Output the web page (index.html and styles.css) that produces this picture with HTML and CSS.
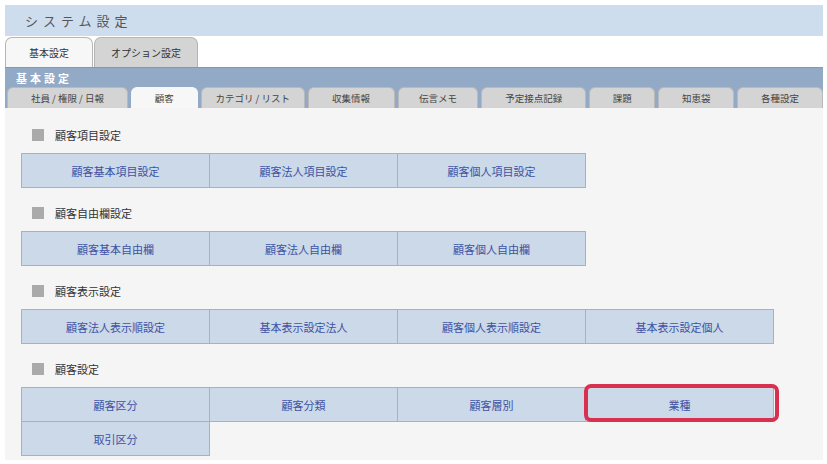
FILE: index.html
```html
<!DOCTYPE html>
<html>
	<head>
		<meta charset="utf-8">
		<title>システム設定</title>
		<link rel="stylesheet" href="styles.css">
	</head>
	<body>
		<div class="header">
			<h1 class="title">システム設定</h1>
		</div>
		<div class="maintabs">
			<span class="mtab active">基本設定</span>
			<span class="mtab">オプション設定</span>
		</div>
		<div class="panel">
			<div class="panel-title">基本設定</div>
			<div class="subtabs">
				<span class="stab w121">社員 / 権限 / 日報</span>
				<span class="stab active w67">顧客</span>
				<span class="stab w104">カテゴリ / リスト</span>
				<span class="stab w87">収集情報</span>
				<span class="stab w81">伝言メモ</span>
				<span class="stab w105">予定接点記録</span>
				<span class="stab w66">課題</span>
				<span class="stab w76">知恵袋</span>
				<span class="stab w86">各種設定</span>
			</div>
		</div>
		<div class="content">
			<div class="section">
				<h2 class="heading">顧客項目設定</h2>
				<div class="buttons">
					<a class="btn" href="#">顧客基本項目設定</a>
					<a class="btn" href="#">顧客法人項目設定</a>
					<a class="btn" href="#">顧客個人項目設定</a>
				</div>
			</div>
			<div class="section">
				<h2 class="heading">顧客自由欄設定</h2>
				<div class="buttons">
					<a class="btn" href="#">顧客基本自由欄</a>
					<a class="btn" href="#">顧客法人自由欄</a>
					<a class="btn" href="#">顧客個人自由欄</a>
				</div>
			</div>
			<div class="section">
				<h2 class="heading">顧客表示設定</h2>
				<div class="buttons">
					<a class="btn" href="#">顧客法人表示順設定</a>
					<a class="btn" href="#">基本表示設定法人</a>
					<a class="btn" href="#">顧客個人表示順設定</a>
					<a class="btn" href="#">基本表示設定個人</a>
				</div>
			</div>
			<div class="section">
				<h2 class="heading">顧客設定</h2>
				<div class="buttons">
					<a class="btn" href="#">顧客区分</a>
					<a class="btn" href="#">顧客分類</a>
					<a class="btn" href="#">顧客層別</a>
					<a class="btn marked" href="#">業種</a>
					<a class="btn" href="#">取引区分</a>
				</div>
			</div>
		</div>
	</body>
</html>
```

FILE: styles.css
```css
body {
	margin: 5px 4px 0 5px;
	font-family: "Noto Sans CJK JP", "Noto Sans", sans-serif;
	color: #333;
	background-color: white;
}

.header {
	height: 31px;
	background-color: #cedded;
	display: flex;
	align-items: center;
}

.title {
	margin: 0 0 0 20px;
	font-size: 13px;
	font-weight: normal;
	letter-spacing: 5px;
	color: #555;
}

.maintabs {
	height: 31px;
	display: flex;
	align-items: flex-end;
	gap: 1px;
}

.mtab {
	height: 30px;
	box-sizing: border-box;
	display: flex;
	align-items: center;
	justify-content: center;
	font-size: 10px;
	color: #333;
	background-color: #d4d4d4;
	border: 1px solid #b5b5b5;
	border-bottom: none;
	border-radius: 7px 7px 0 0;
	width: 104px;
}

.mtab.active {
	background-color: #f7f7f7;
	width: 88px;
}

.panel {
	background-color: #93aac6;
	border-top: 1px solid #8199b6;
}

.panel-title {
	height: 19px;
	padding-left: 11px;
	font-size: 11px;
	font-weight: bold;
	letter-spacing: 3px;
	line-height: 20px;
	color: white;
}

.subtabs {
	height: 21px;
	display: flex;
	align-items: flex-end;
	gap: 3px;
	padding-left: 2px;
}

.stab {
	height: 21px;
	box-sizing: border-box;
	display: flex;
	align-items: center;
	justify-content: center;
	font-size: 9.5px;
	color: #444;
	background-color: #d4d4d4;
	border: 1px solid #b9b9b9;
	border-bottom: none;
	border-radius: 6px 6px 0 0;
}

.stab.active {
	background-color: #f7f7f7;
	border-color: #f7f7f7;
}

.w121 { width: 121px; }
.w67 { width: 67px; }
.w104 { width: 104px; }
.w87 { width: 87px; }
.w81 { width: 81px; }
.w105 { width: 105px; }
.w66 { width: 66px; }
.w76 { width: 76px; }
.w86 { width: 86px; }

.content {
	background-color: #f5f5f5;
	padding: 1px 0 5px 16px;
}

.section {
	margin-top: 17px;
}

.heading {
	height: 17px;
	margin: 0 0 10px 11px;
	display: flex;
	align-items: center;
	font-size: 11px;
	font-weight: normal;
	color: #333;
}

.heading:before {
	content: "";
	width: 12px;
	height: 12px;
	margin-right: 11px;
	background-color: #aaaaaa;
}

.buttons {
	width: 753px;
	display: flex;
	flex-wrap: wrap;
}

.btn {
	position: relative;
	width: 189px;
	height: 35px;
	box-sizing: border-box;
	margin: 0 -1px -1px 0;
	display: flex;
	align-items: center;
	justify-content: center;
	background-color: #cbd9e8;
	border: 1px solid #a7b2bf;
	font-size: 11px;
	color: #3d52a4;
	text-decoration: none;
}

.marked:after {
	content: "";
	position: absolute;
	left: -2px;
	right: -6px;
	top: -4px;
	bottom: -1px;
	border: 4px solid #d8314f;
	border-radius: 7px;
}
```
